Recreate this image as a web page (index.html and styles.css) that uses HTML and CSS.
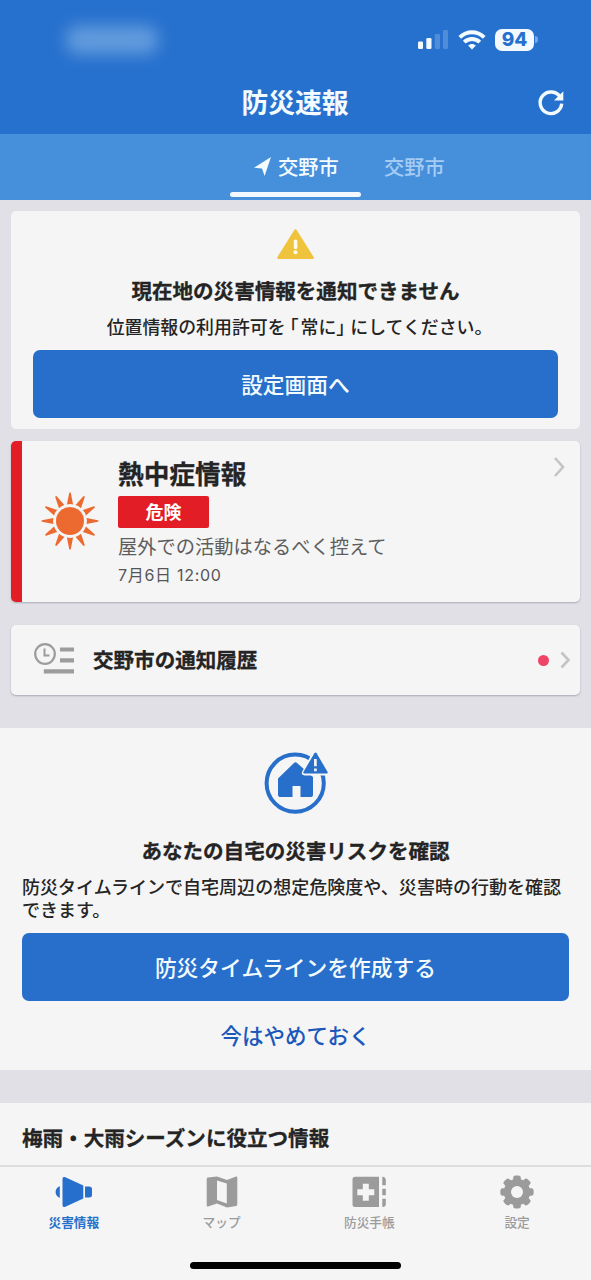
FILE: index.html
```html
<!DOCTYPE html>
<html lang="ja">
<head>
<meta charset="utf-8">
<title>防災速報</title>
<link rel="stylesheet" href="styles.css">
</head>
<body>
<div class="app">
  <header class="header">
    <div class="status">
      <div class="status-time"></div>
      <div class="status-icons">
        <svg width="30" height="20" viewBox="0 0 30 20" fill="#f3fbff"><rect x="0" y="11.5" width="5" height="7.5" rx="1.3"/><rect x="8.3" y="8" width="5.2" height="11" rx="1.3"/><rect x="16.8" y="4" width="5.2" height="15" rx="1.3" opacity=".2"/><rect x="25" y="0" width="5" height="19" rx="1.3" opacity=".2"/></svg>
        <svg class="wifi" width="28" height="20" viewBox="0 0 28 20" fill="none" stroke="#f3fbff" stroke-width="3.9"><path d="M1.8 7.3C8.8.6 19.2.6 26.200 7.3"/><path d="M6.2 12.1c4.5-4.2 11.1-4.2 15.6 0"/><path d="M14 19.5l-3.900-3.900c2.200-2.100 5.600-2.100 7.800 0z" fill="#f3fbff" stroke="none"/></svg>
        <div class="battery">94</div><div class="battery-tip"></div>
      </div>
    </div>
    <div class="titlebar">
      <h1 class="title">防災速報</h1>
      <svg class="reload" width="26" height="26" viewBox="0 0 26 26"><path d="M22.2 8.2A10.8 10.8 0 1 0 23.7 14.7" fill="none" stroke="#f3fbff" stroke-width="3.4"/><path d="M25.3 2.2V11.500H16z" fill="#f3fbff"/></svg>
    </div>
  </header>
  <nav class="tabs">
    <div class="tab-active">
      <div class="tab-label"><svg width="17" height="19" viewBox="0 0 17 19"><path d="M17 0L0 10.7l8 .8L10.6 19z" fill="#f3fbff"/></svg><span>交野市</span></div>
      <div class="tab-bar"></div>
    </div>
    <div class="tab-muted">交野市</div>
  </nav>
  <main class="content">
    <section class="card notice">
      <svg width="37" height="30" viewBox="0 0 36 30" preserveAspectRatio="none"><path d="M16.7 1.2q1.3-2 2.6 0L35.6 28q.9 2-1.2 2H1.6q-2.1 0-1.2-2z" fill="#efc33c"/><rect x="16.3" y="10.5" width="3.5" height="9.7" rx="1.7" fill="#fffbe8"/><circle cx="18" cy="23.3" r="2" fill="#fffbe8"/></svg>
      <h2 class="heading">現在地の災害情報を通知できません</h2>
      <p class="body">位置情報の利用許可を<span class="quote-open">「</span>常に<span class="quote-close">」</span>にしてください。</p>
      <button class="button">設定画面へ</button>
    </section>
    <section class="card heat">
      <svg class="sun" width="58" height="58" viewBox="-29 -29 58 58" fill="#ec6a30"><circle r="14"/><g id="rays"><path id="ray" d="M-3.1-16.6L-.8-28q.8-1.4 1.6 0L3.1-16.6q-3.1-.7-6.2 0z"/><use href="#ray" transform="rotate(30)"/><use href="#ray" transform="rotate(60)"/></g><use href="#rays" transform="rotate(90)"/><use href="#rays" transform="rotate(180)"/><use href="#rays" transform="rotate(270)"/></svg>
      <div class="heat-text">
        <h2 class="heat-title">熱中症情報</h2>
        <div class="badge">危険</div>
        <p class="heat-desc">屋外での活動はなるべく控えて</p>
        <p class="heat-date">7月6日 12:00</p>
      </div>
      <svg class="heat-chevron" width="12" height="22" viewBox="0 0 12 22"><path d="M2 2l8 9-8 9" class="chevron"/></svg>
    </section>
    <section class="card history">
      <svg class="history-icon" width="40" height="31" viewBox="0 0 40 31" fill="#9c9c9c"><circle cx="11" cy="11" r="9.800" fill="none" stroke="#9c9c9c" stroke-width="2.2"/><path d="M10.5 5.5v7h5" fill="none" stroke="#9c9c9c" stroke-width="2"/><path d="M26 4.500h14v4H26zM26 15.300h14v4.200H26zM9.800 26.200H40v4.300H9.800z"/></svg>
      <h2 class="heading history-title">交野市の通知履歴</h2>
      <span class="dot"></span>
      <svg width="10" height="18" viewBox="0 0 10 18"><path d="M1.5 1.5L8.5 9l-7 7.5" class="chevron"/></svg>
    </section>
    <section class="panel risk">
      <svg width="64" height="62" viewBox="0 0 64 62"><circle cx="31.2" cy="31.2" r="28.600" fill="none" stroke="#276fca" stroke-width="4"/><path d="M14 26.5L30 11q1.5-1.500 3 0L49 25v18q0 2-2 2H36.500V34h-8v11H16q-2 0-2-2z" fill="#276fca"/><path d="M49.2-1q2.3-3 4.6 0L66.5 19q1.8 4-2 4.5h-24q-4-.5-2-4.500z" fill="#f5f5f5"/><path d="M50.400 1.3q1.1-1.6 2.2 0L63.6 20q.7 1.6-1 1.6H40.4q-1.700 0-1-1.6z" fill="#276fca"/><path d="M51.4 7v7.3M51.4 16.5v2.7" stroke="#f5f5f5" stroke-width="2.700"/></svg>
      <h2 class="heading">あなたの自宅の災害リスクを確認</h2>
      <p class="body risk-body">防災タイムラインで自宅周辺の想定危険度や、災害時の行動を確認できます。</p>
      <button class="button">防災タイムラインを作成する</button>
      <a class="skip">今はやめておく</a>
    </section>
    <section class="panel season">
      <h2 class="heading">梅雨・大雨シーズンに役立つ情報</h2>
    </section>
  </main>
  <footer class="bottom">
    <nav class="bottom-nav">
      <div class="nav-item nav-active"><svg width="38" height="34" viewBox="0 0 38 34" fill="currentColor"><path d="M4.800 11v12C-.8 20.500-.8 13.500 4.800 11zM7.500 4q0-2.800 2.300-1.900L28.300 10.500v13L9.800 31.900q-2.300.8-2.300-1.900zM30 11.500h4q3 0 3 2.500v6q0 2.500-3 2.500h-4z"/></svg><span>災害情報</span></div>
      <div class="nav-item"><svg width="32" height="34" viewBox="0 0 32 34"><path d="M.7 4Q.7 3 1.700 2.600L11 1.500 21 5l9-3.500q1.300-.2 1.300 1V29.500q0 1-1 1.400L21 32.500 11 28.500l-9 3q-1.300.2-1.300-1z" fill="currentColor"/><path d="M11 5.500L20.800 8.500V28.500L11 25z" fill="#f5f5f5"/></svg><span>マップ</span></div>
      <div class="nav-item"><svg width="36" height="34" viewBox="0 0 36 34" fill="currentColor"><path d="M4 1.700h24V32H4q-2.500 0-2.500-2.500V4.200Q1.500 1.700 4 1.700zM31.300 1.700q3.500 0 3.500 3.500v5h-3.500zM31.300 13.700h3.500v6.500h-3.500zM31.300 23.800h3.500v5.500q0 2.700-3.500 2.700z"/><path d="M11.800 8.800h6v5.500h5.500v6h-5.500v5.500h-6v-5.500H6.300v-6h5.500z" fill="#f5f5f5"/></svg><span>防災手帳</span></div>
      <div class="nav-item"><svg width="34" height="34" viewBox="-17 -17 34 34" fill="currentColor"><g id="teeth"><rect id="tooth" x="-3.800" y="-16.600" width="7.600" height="33.200" rx="2.300"/><use href="#tooth" transform="rotate(45)"/></g><use href="#teeth" transform="rotate(90)"/><circle r="13.200"/><circle r="6" fill="#f5f5f5"/></svg><span>設定</span></div>
    </nav>
    <div class="home-indicator"></div>
  </footer>
</div>
</body>
</html>
```
FILE: styles.css
```css
* { box-sizing: border-box; }
body { margin: 0; background: #e1e0e6; font-family: "Noto Sans CJK JP", sans-serif; color: #242424; }
h1, h2, p { margin: 0; }
svg { display: block; flex: none; overflow: visible; }
.app { width: 591px; height: 1280px; display: flex; flex-direction: column; overflow: hidden; }
.header { height: 134px; flex: none; background: #2771ce; color: #f3fbff; }
.status { height: 80px; display: flex; justify-content: space-between; padding: 26px 53px 0 66px; }
.status-time { width: 92px; height: 28px; border-radius: 12px; background: #639cdd; filter: blur(8px); }
.status-icons { display: flex; align-items: flex-start; padding-top: 4px; }
.wifi { margin: 0 9px 0 10px; }
.battery { width: 39px; height: 22px; margin-top: -1px; border-radius: 7px; background: #f3faff; color: #2771ce; font: 800 19px/22px Inter, sans-serif; text-align: center; }
.battery-tip { width: 3px; height: 7px; margin: 6px 0 0 1px; border-radius: 0 3px 3px 0; background: #76a9e4; }
.titlebar { display: grid; grid-template-columns: 1fr auto 1fr; align-items: center; height: 44px; padding-right: 27px; }
.title { grid-column: 2; font-size: 26.800px; line-height: 40px; font-weight: 700; margin-left: 26px; }
.reload { justify-self: end; margin-bottom: 1px; }
.tabs { height: 66px; flex: none; display: flex; background: #468fdb; padding-left: 230px; font-size: 20.300px; font-weight: 500; line-height: 64px; color: #f3fbff; }
.tab-active { width: 131px; }
.tab-label { height: 58px; display: flex; align-items: center; gap: 7px; padding: 6px 0 0 24px; }
.tab-label span { line-height: 56px; }
.tab-bar { height: 5px; border-radius: 3px; background: #f1f8ff; }
.tab-muted { margin-left: 23px; color: #a3cbf3; }
.content { flex: 1; min-height: 0; overflow: hidden; padding-top: 11px; }
.card { margin: 0 11px; background: #f5f5f5; border-radius: 5px; }
.notice { height: 218px; padding: 18px 22px 0; display: flex; flex-direction: column; align-items: center; }
.heading { font-size: 20.550px; line-height: 30px; font-weight: 700; -webkit-text-stroke: .3px currentColor; }
.notice .heading { margin-top: 16px; }
.body { font-size: 18px; line-height: 23px; font-weight: 500; white-space: nowrap; }
.notice .body { margin: 10px 0 12px 8px; font-size: 17.900px; }
.quote-open, .quote-close { font-feature-settings: "halt"; }
.quote-open { margin: 0 2px 0 4px; }
.quote-close { margin-right: 5px; }
.button { width: 100%; height: 68px; flex: none; border: 0; border-radius: 7px; padding: 0; background: #276fca; color: #f3fbff; font: 500 21.750px/68px "Noto Sans CJK JP", sans-serif; }
.heat { height: 161px; margin-top: 12px; padding-left: 19px; border-left: 11px solid #e31d25; display: flex; box-shadow: 0 1px 2px #aaaab2; }
.sun { margin-top: 51px; }
.heat-text { padding: 14px 0 0 19px; flex: 1; }
.heat-title { font-size: 25.700px; line-height: 36px; font-weight: 700; -webkit-text-stroke: .3px currentColor; }
.badge { width: 91px; height: 32px; margin-top: 5px; border-radius: 2px; background: #e31d25; color: #fff; font-size: 18px; line-height: 31px; font-weight: 700; text-align: center; }
.heat-desc { margin-top: 4px; font-size: 19.250px; line-height: 28px; color: #5e5e5e; }
.heat-date { margin-top: 4px; font: 400 16px/22px Inter, "Noto Sans CJK JP", sans-serif; color: #555; letter-spacing: .7px; }
.heat-chevron { margin: 15px 15px 0 0; }
.chevron { fill: none; stroke: #c4c4c4; stroke-width: 2.600; }
.history { height: 70px; margin-top: 23px; padding: 0 10px 0 23px; display: flex; align-items: center; box-shadow: 0 1px 2px #aaaab2; }
.history-icon { margin-bottom: 3px; }
.history-title { margin: 0 0 2px 19px; flex: 1; }
.dot { width: 11px; height: 11px; border-radius: 50%; background: #ee4468; margin-right: 11px; }
.panel { background: #f5f5f5; }
.risk { height: 342px; margin-top: 33px; padding: 24px 22px 0; display: flex; flex-direction: column; align-items: center; }
.risk .heading { margin-top: 21px; }
.risk-body { white-space: normal; width: 547px; margin: 10px 0 12px; font-size: 18.050px; }
.skip { margin-top: 18px; font-size: 21.500px; line-height: 32px; font-weight: 500; color: #1b58bb; }
.season { height: 90px; margin-top: 33px; padding: 19px 22px; }
.bottom { height: 115px; flex: none; background: #f5f5f5; border-top: 2px solid #dedee0; }
.bottom-nav { display: grid; grid-template-columns: repeat(4, 1fr); height: 95px; }
.nav-item { display: flex; flex-direction: column; align-items: center; padding-top: 8px; color: #9b9b9b; font-size: 12.700px; line-height: 20px; font-weight: 500; gap: 3px; }
.nav-active { color: #276fcc; font-weight: 700; }
.home-indicator { width: 211px; height: 7px; margin: 0 auto; border-radius: 4px; background: #000; }
```
